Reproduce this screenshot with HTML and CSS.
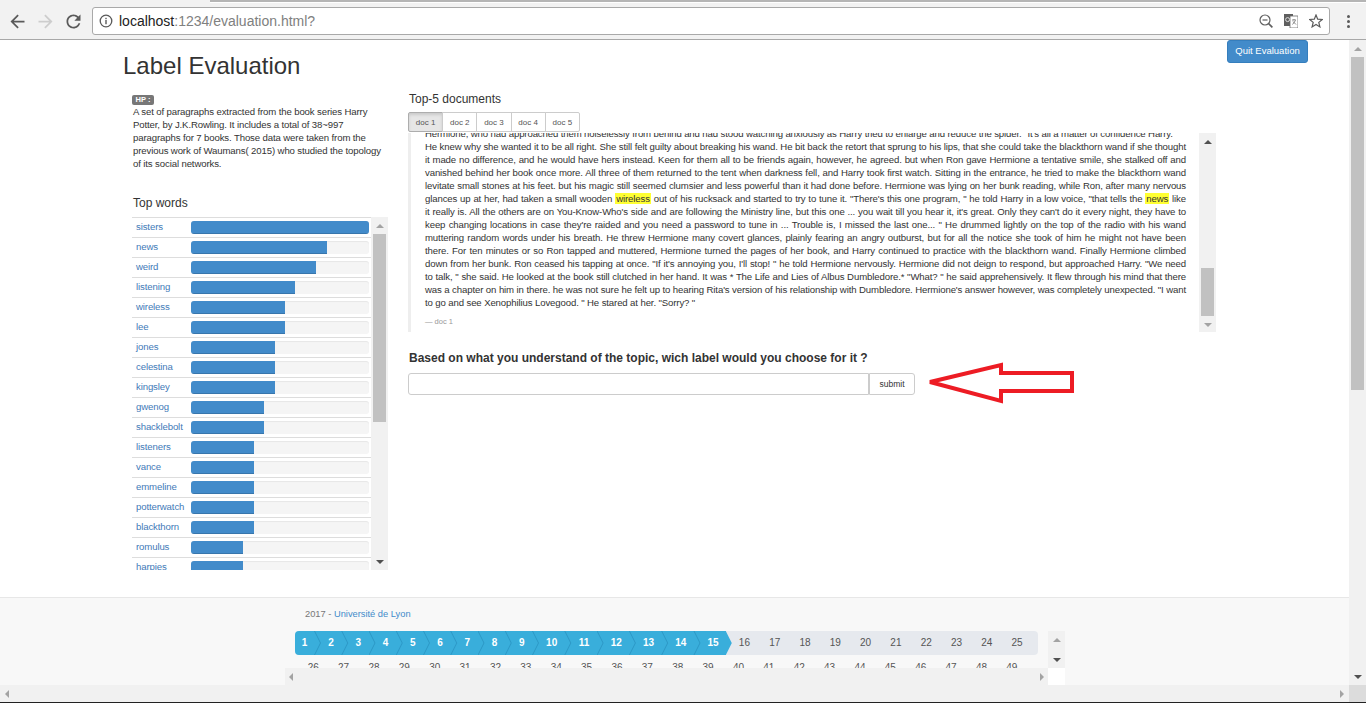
FILE: index.html
```html
<!DOCTYPE html>
<html lang="en">
<head>
    <meta charset="UTF-8">
    <title>Label Evaluation</title>
    <link rel="stylesheet" href="styles.css">
</head>
<body>
    <div class="tabstrip"><div class="tab"></div><div class="tab-rest"></div></div>
    <div class="toolbar">
        <svg class="nav-icon" viewBox="0 0 24 24"><path fill="#5a5a5a" d="M20 11H7.83l5.59-5.59L12 4l-8 8 8 8 1.41-1.41L7.83 13H20v-2z"/></svg>
        <svg class="nav-icon" viewBox="0 0 24 24"><path fill="#cdcdcd" d="M4 11h12.17l-5.59-5.59L12 4l8 8-8 8-1.41-1.41L16.17 13H4v-2z"/></svg>
        <svg class="nav-icon" viewBox="0 0 24 24"><path fill="#5a5a5a" d="M17.65 6.35C16.2 4.9 14.21 4 12 4c-4.42 0-7.99 3.58-7.99 8s3.57 8 7.99 8c3.73 0 6.84-2.55 7.73-6h-2.08c-.82 2.33-3.04 4-5.65 4-3.31 0-6-2.69-6-6s2.69-6 6-6c1.66 0 3.14.69 4.22 1.78L13 11h7V4l-2.35 2.35z"/></svg>
        <div class="urlbar">
            <svg class="info-icon" viewBox="0 0 14 14"><circle cx="7" cy="7" r="5.8" fill="none" stroke="#5a5a5a" stroke-width="1.3"/><rect x="6.3" y="6" width="1.4" height="4.2" fill="#5a5a5a"/><rect x="6.3" y="3.8" width="1.4" height="1.4" fill="#5a5a5a"/></svg>
            <span class="url"><span class="url-host">localhost</span>:1234/evaluation.html?</span>
            <svg class="url-icon" viewBox="0 0 14 14"><circle cx="6" cy="6" r="5" fill="none" stroke="#5f5f5f" stroke-width="1.2"/><path d="M3.5 6h5" stroke="#5f5f5f" stroke-width="1.2"/><path d="M9.6 9.6L13.4 13.4" stroke="#5f5f5f" stroke-width="1.6"/></svg>
            <svg class="url-icon" viewBox="0 0 14 14"><rect x="0" y="0" width="9" height="12" fill="#5f5f5f"/><rect x="6" y="2" width="8" height="12" fill="#fff" stroke="#6a6a6a" stroke-width=".8"/><circle cx="3.6" cy="5.6" r="2" fill="none" stroke="#ddd" stroke-width="1"/><path d="M8 6h4M10 5v1M8.5 10.5L11.5 6.5M9 7.5l3 3" stroke="#6a6a6a" stroke-width=".8"/></svg>
            <svg class="url-icon" viewBox="0 0 14 14"><polygon points="7,1 8.7,5.2 13.3,5.5 9.8,8.4 10.9,12.9 7,10.5 3.1,12.9 4.2,8.4 .7,5.5 5.3,5.2" fill="none" stroke="#5a5a5a" stroke-width="1.2"/></svg>
        </div>
        <div class="menu-dots"><i></i><i></i><i></i></div>
    </div>

    <div class="window">
        <div class="viewport">
            <div class="page">
                <div class="page-head">
                    <h1>Label Evaluation</h1>
                    <button class="quit-btn">Quit Evaluation</button>
                </div>

                <div class="columns">
                    <div class="left-col">
                        <span class="tag">HP :</span>
                        <p class="intro">A set of paragraphs extracted from the book series Harry Potter, by J.K.Rowling. It includes a total of 38~997 paragraphs for 7 books. Those data were taken from the previous work of Waumans( 2015) who studied the topology of its social networks.</p>
                        <h3 class="words-title">Top words</h3>
                        <div class="words-box">
                            <div class="words">
                                <div class="word"><span>sisters</span><div class="bar"><div class="fill" style="width:100%"></div></div></div>
                                <div class="word"><span>news</span><div class="bar"><div class="fill" style="width:76.4%"></div></div></div>
                                <div class="word"><span>weird</span><div class="bar"><div class="fill" style="width:70.2%"></div></div></div>
                                <div class="word"><span>listening</span><div class="bar"><div class="fill" style="width:58.4%"></div></div></div>
                                <div class="word"><span>wireless</span><div class="bar"><div class="fill" style="width:52.8%"></div></div></div>
                                <div class="word"><span>lee</span><div class="bar"><div class="fill" style="width:52.8%"></div></div></div>
                                <div class="word"><span>jones</span><div class="bar"><div class="fill" style="width:47.2%"></div></div></div>
                                <div class="word"><span>celestina</span><div class="bar"><div class="fill" style="width:47.2%"></div></div></div>
                                <div class="word"><span>kingsley</span><div class="bar"><div class="fill" style="width:47.2%"></div></div></div>
                                <div class="word"><span>gwenog</span><div class="bar"><div class="fill" style="width:41%"></div></div></div>
                                <div class="word"><span>shacklebolt</span><div class="bar"><div class="fill" style="width:41%"></div></div></div>
                                <div class="word"><span>listeners</span><div class="bar"><div class="fill" style="width:35.4%"></div></div></div>
                                <div class="word"><span>vance</span><div class="bar"><div class="fill" style="width:35.4%"></div></div></div>
                                <div class="word"><span>emmeline</span><div class="bar"><div class="fill" style="width:35.4%"></div></div></div>
                                <div class="word"><span>potterwatch</span><div class="bar"><div class="fill" style="width:35.4%"></div></div></div>
                                <div class="word"><span>blackthorn</span><div class="bar"><div class="fill" style="width:35.4%"></div></div></div>
                                <div class="word"><span>romulus</span><div class="bar"><div class="fill" style="width:29.2%"></div></div></div>
                                <div class="word"><span>harpies</span><div class="bar"><div class="fill" style="width:29.2%"></div></div></div>
                            </div>
                            <div class="vbar">
                                <div class="sb-btn"><i class="arrow up off"></i></div>
                                <div class="sb-track"><div class="thumb thumb-words"></div></div>
                                <div class="sb-btn"><i class="arrow down"></i></div>
                            </div>
                        </div>
                    </div>

                    <div class="right-col">
                        <h3 class="docs-title">Top-5 documents</h3>
                        <div class="tabs">
                            <button class="doc-tab active">doc 1</button>
                            <button class="doc-tab">doc 2</button>
                            <button class="doc-tab">doc 3</button>
                            <button class="doc-tab">doc 4</button>
                            <button class="doc-tab">doc 5</button>
                        </div>
                        <div class="doc-box">
                            <div class="doc-quote">
                                <div class="doc-text">
                                    <span class="line last">Hermione, who had approached them noiselessly from behind and had stood watching anxiously as Harry tried to enlarge and reduce the spider. "It's all a matter of confidence Harry.</span>
                                    <span class="line">He knew why she wanted it to be all right. She still felt guilty about breaking his wand. He bit back the retort that sprung to his lips, that she could take the blackthorn wand if she thought</span>
                                    <span class="line">it made no difference, and he would have hers instead. Keen for them all to be friends again, however, he agreed. but when Ron gave Hermione a tentative smile, she stalked off and</span>
                                    <span class="line">vanished behind her book once more. All three of them returned to the tent when darkness fell, and Harry took first watch. Sitting in the entrance, he tried to make the blackthorn wand</span>
                                    <span class="line">levitate small stones at his feet. but his magic still seemed clumsier and less powerful than it had done before. Hermione was lying on her bunk reading, while Ron, after many nervous</span>
                                    <span class="line">glances up at her, had taken a small wooden <mark>wireless</mark> out of his rucksack and started to try to tune it. "There's this one program, " he told Harry in a low voice, "that tells the <mark>news</mark> like</span>
                                    <span class="line">it really is. All the others are on You-Know-Who's side and are following the Ministry line, but this one ... you wait till you hear it, it's great. Only they can't do it every night, they have to</span>
                                    <span class="line">keep changing locations in case they're raided and you need a password to tune in ... Trouble is, I missed the last one... " He drummed lightly on the top of the radio with his wand</span>
                                    <span class="line">muttering random words under his breath. He threw Hermione many covert glances, plainly fearing an angry outburst, but for all the notice she took of him he might not have been</span>
                                    <span class="line">there. For ten minutes or so Ron tapped and muttered, Hermione turned the pages of her book, and Harry continued to practice with the blackthorn wand. Finally Hermione climbed</span>
                                    <span class="line">down from her bunk. Ron ceased his tapping at once. "If it's annoying you, I'll stop! " he told Hermione nervously. Hermione did not deign to respond, but approached Harry. "We need</span>
                                    <span class="line">to talk, " she said. He looked at the book still clutched in her hand. It was * The Life and Lies of Albus Dumbledore.* "What? " he said apprehensively. It flew through his mind that there</span>
                                    <span class="line">was a chapter on him in there. he was not sure he felt up to hearing Rita's version of his relationship with Dumbledore. Hermione's answer however, was completely unexpected. "I want</span>
                                    <span class="line last">to go and see Xenophilius Lovegood. " He stared at her. "Sorry? "</span>
                                </div>
                                <div class="doc-source">— doc 1</div>
                            </div>
                            <div class="vbar">
                                <div class="sb-btn"><i class="arrow up"></i></div>
                                <div class="sb-track"><div class="thumb thumb-doc"></div></div>
                                <div class="sb-btn"><i class="arrow down off"></i></div>
                            </div>
                        </div>

                        <h4 class="question">Based on what you understand of the topic, wich label would you choose for it ?</h4>
                        <div class="answer-row">
                            <input type="text" class="answer">
                            <button class="submit-btn">submit</button>
                            <svg class="red-arrow" width="148" height="42" viewBox="0 0 148 42"><polygon points="3,20 74,3 74,11 145,11 145,29 74,29 74,39" fill="#fff" stroke="#ed1c24" stroke-width="4"/></svg>
                        </div>
                    </div>
                </div>

                <div class="footer">
                    <p class="credit">2017 - <a href="#">Université de Lyon</a></p>
                    <div class="steps-box">
                        <div class="steps-scroll">
                            <ol class="steps">
                                <li class="step first">1</li><li class="step">2</li><li class="step">3</li><li class="step">4</li><li class="step">5</li><li class="step">6</li><li class="step">7</li><li class="step">8</li><li class="step">9</li><li class="step wide">10</li><li class="step wide">11</li><li class="step wide">12</li><li class="step wide">13</li><li class="step wide">14</li><li class="step wide">15</li><li class="todo next">16</li><li class="todo">17</li><li class="todo">18</li><li class="todo">19</li><li class="todo">20</li><li class="todo">21</li><li class="todo">22</li><li class="todo">23</li><li class="todo">24</li><li class="todo">25</li>
                            </ol>
                            <ol class="steps-more">
                                <li>26</li><li>27</li><li>28</li><li>29</li><li>30</li><li>31</li><li>32</li><li>33</li><li>34</li><li>35</li><li>36</li><li>37</li><li>38</li><li>39</li><li>40</li><li>41</li><li>42</li><li>43</li><li>44</li><li>45</li><li>46</li><li>47</li><li>48</li><li>49</li>
                            </ol>
                        </div>
                        <div class="vbar">
                            <div class="sb-btn"><i class="arrow up off"></i></div>
                            <div class="sb-btn"><i class="arrow down"></i></div>
                        </div>
                        <div class="hbar">
                            <i class="arrow left off"></i>
                            <i class="arrow right off"></i>
                        </div>
                        <div class="corner-white"></div>
                    </div>
                </div>
            </div>
            <div class="vbar page-vbar">
                <div class="sb-btn"><i class="arrow up off"></i></div>
                <div class="sb-track"><div class="thumb thumb-page"></div></div>
                <div class="sb-btn"><i class="arrow down"></i></div>
            </div>
        </div>
        <div class="page-hbar">
            <i class="arrow left off"></i>
            <i class="arrow right off"></i>
            <div class="corner"></div>
        </div>
    </div>
    <div class="taskbar-line"></div>
</body>
</html>
```

FILE: styles.css
```css
* {
    box-sizing: border-box;
}
html, body {
    margin: 0;
    height: 703px;
    overflow: hidden;
}
body {
    font-family: "Liberation Sans", Arial, sans-serif;
    font-size: 10px;
    color: #333;
    background: #fff;
    display: flex;
    flex-direction: column;
}

/* browser bar */
.tabstrip {
    display: flex;
    height: 3px;
    background: #f2f2f2;
}
.tab {
    width: 210px;
}
.tab-rest {
    flex: 1;
    border-top: 2px solid #b5b5b5;
    background: #fff;
}
.toolbar {
    height: 37px;
    background: #f2f2f2;
    border-bottom: 1px solid #a8a8a8;
    display: flex;
    align-items: center;
    padding: 0 0 0 7px;
    gap: 7px;
    flex: none;
}
.nav-icon {
    width: 21px;
    height: 21px;
    flex: none;
}
.urlbar {
    width: 1238px;
    height: 28px;
    margin-left: 1px;
    background: #fff;
    border: 1px solid #a9a9a9;
    border-radius: 3px;
    display: flex;
    align-items: center;
    padding: 0 6px 0 6px;
}
.info-icon {
    width: 14px;
    height: 14px;
    flex: none;
}
.url {
    margin-left: 6px;
    font-size: 14px;
    color: #808080;
    flex: 1;
}
.url-host {
    color: #222;
}
.url-icon {
    width: 14px;
    height: 14px;
    margin-left: 11px;
    flex: none;
}
.menu-dots {
    display: flex;
    flex-direction: column;
    gap: 2px;
    margin-left: 10px;
}
.menu-dots i {
    width: 3px;
    height: 3px;
    border-radius: 50%;
    background: #5a5a5a;
}

/* window and scrollbars */
.window {
    flex: none;
    height: 662px;
    display: flex;
    flex-direction: column;
}
.viewport {
    height: 645px;
    display: flex;
}
.page {
    flex: 1;
    min-width: 0;
    display: flex;
    flex-direction: column;
}
.vbar {
    width: 17px;
    flex: none;
    background: #f1f1f1;
    display: flex;
    flex-direction: column;
    justify-content: space-between;
}
.sb-btn {
    height: 17px;
    flex: none;
    display: flex;
    align-items: center;
    justify-content: center;
}
.sb-track {
    flex: 1;
    padding: 0 2px;
}
.thumb {
    background: #c1c1c1;
}
.thumb-words {
    margin-top: 0;
    height: 188px;
}
.thumb-doc {
    margin-top: 118px;
    height: 48px;
}
.thumb-page {
    height: 333px;
}
.arrow {
    display: block;
    width: 0;
    height: 0;
    border: 4px solid transparent;
}
.arrow.up {
    border-top-width: 0;
    border-bottom-color: #505050;
}
.arrow.down {
    border-bottom-width: 0;
    border-top-color: #505050;
}
.arrow.left {
    border-left-width: 0;
    border-right-color: #a3a3a3;
}
.arrow.right {
    border-right-width: 0;
    border-left-color: #a3a3a3;
}
.arrow.up.off {
    border-bottom-color: #a3a3a3;
}
.arrow.down.off {
    border-top-color: #a3a3a3;
}
.page-hbar {
    height: 17px;
    background: #f1f1f1;
    display: flex;
    align-items: center;
    justify-content: space-between;
    padding-left: 5px;
}
.page-hbar .arrow.right {
    margin-left: auto;
    margin-right: 5px;
}
.corner {
    width: 17px;
    height: 17px;
    background: #dcdcdc;
}
.taskbar-line {
    height: 1px;
    background: #222;
    flex: none;
}

/* header */
.page-head {
    height: 51px;
    flex: none;
    display: flex;
    justify-content: space-between;
    align-items: flex-start;
    padding: 0 41px 0 123px;
}
h1 {
    font-size: 24px;
    font-weight: normal;
    line-height: 28px;
    margin: 12px 0 0;
}
.quit-btn {
    font: 9.5px "Liberation Sans", Arial, sans-serif;
    color: #fff;
    background: #428bca;
    border: 1px solid #357ebd;
    border-radius: 3px;
    height: 23px;
    width: 81px;
    padding: 0 0 2px;
}

/* columns */
.columns {
    flex: 1;
    min-height: 0;
    display: grid;
    grid-template-columns: 256px 808px;
    column-gap: 20px;
    padding-left: 132px;
}
.tag {
    display: block;
    width: 22px;
    height: 10px;
    margin-top: 4px;
    background: #777;
    color: #fff;
    font-size: 7.5px;
    font-weight: bold;
    line-height: 10px;
    text-align: center;
    border-radius: 2px;
}
.intro {
    margin: 0;
    width: 250px;
    font-size: 9.6px;
    letter-spacing: -0.12px;
    line-height: 13px;
    padding-left: 1px;
}
.words-title {
    font-size: 12px;
    font-weight: normal;
    line-height: 14px;
    margin: 26px 0 7px 1px;
}
.words-box {
    display: flex;
    height: 353px;
}
.words {
    width: 239px;
    overflow: hidden;
}
.word {
    height: 20px;
    border-top: 1px solid #ddd;
    display: flex;
    align-items: center;
    padding: 0 2px 0 4px;
}
.word span {
    width: 55px;
    flex: none;
    padding-bottom: 2px;
    font-size: 9.6px;
    letter-spacing: -0.12px;
    color: #3f7ab8;
}
.bar {
    flex: 1;
    height: 13px;
    background: #f5f5f5;
    border-radius: 3px;
    overflow: hidden;
    box-shadow: inset 0 1px 1px rgba(0, 0, 0, 0.06);
}
.fill {
    height: 100%;
    background: #428bca;
    box-shadow: inset 0 -1px 0 rgba(0, 0, 0, 0.15);
}

/* documents */
.docs-title {
    font-size: 12px;
    font-weight: normal;
    line-height: 14px;
    margin: 1px 0 6px 1px;
}
.tabs {
    display: flex;
    height: 21px;
    padding-bottom: 1px;
    position: relative;
    z-index: 1;
}
.doc-tab {
    width: 35.2px;
    height: 20px;
    margin-right: -1px;
    padding: 0;
    font: 8px "Liberation Sans", Arial, sans-serif;
    color: #555;
    background: #fff;
    border: 1px solid #ccc;
}
.doc-tab:first-child {
    border-radius: 2px 0 0 2px;
}
.doc-tab:last-child {
    border-radius: 0 2px 2px 0;
}
.doc-tab.active {
    background: #e6e6e6;
    border-color: #adadad;
    box-shadow: inset 0 2px 3px rgba(0, 0, 0, 0.12);
}
.doc-box {
    display: flex;
    height: 199px;
}
.doc-quote {
    flex: 1;
    overflow: hidden;
    border-left: 3px solid #eee;
    padding: 0 13px 0 14px;
}
.doc-text {
    margin-top: -6px;
    font-size: 9.6px;
    letter-spacing: -0.12px;
    line-height: 13px;
}
.line {
    display: block;
    text-align: justify;
    text-align-last: justify;
    white-space: nowrap;
}
.line.last {
    text-align-last: left;
}
mark {
    background: #ffff33;
    color: #333;
    padding: 0 1px;
}
.doc-source {
    margin-top: 7px;
    font-size: 7.5px;
    line-height: 11px;
    color: #999;
}
.question {
    font-size: 12px;
    font-weight: bold;
    line-height: 14px;
    margin: 19px 0 8px 1px;
}
.answer-row {
    display: flex;
    align-items: flex-start;
}
.answer {
    width: 461px;
    height: 22px;
    border: 1px solid #ccc;
    border-radius: 3px 0 0 3px;
    background: #fff;
    padding: 0 6px;
}
.submit-btn {
    width: 46px;
    height: 22px;
    padding: 0;
    font: 8.5px "Liberation Sans", Arial, sans-serif;
    color: #333;
    background: #fff;
    border: 1px solid #ccc;
    border-radius: 0 3px 3px 0;
}
.red-arrow {
    flex: none;
    margin: -11px 0 0 12px;
}

/* footer */
.footer {
    height: 88px;
    flex: none;
    background: #f8f8f8;
    border-top: 1px solid #e7e7e7;
    padding: 10px 0 0 285px;
}
.credit {
    margin: 0 0 10px 20px;
    font-size: 9.3px;
    line-height: 13px;
    color: #777;
}
.credit a {
    color: #428bca;
    text-decoration: none;
}
.steps-box {
    width: 780px;
    height: 54px;
    display: grid;
    grid-template-columns: 763px 17px;
    grid-template-rows: 37px 17px;
}
.steps-scroll {
    overflow: hidden;
    padding-left: 10px;
}
.steps, .steps-more {
    list-style: none;
    margin: 0;
    padding: 0;
    display: flex;
}
.steps {
    width: 743px;
    height: 24px;
    background: #e6e9ee;
    border-radius: 4px;
    padding-right: 9px;
}
.step, .todo {
    position: relative;
    height: 24px;
    line-height: 24px;
    text-align: center;
    padding-left: 7px;
}
.step {
    width: 27.25px;
    background: #39aedb;
    color: #fff;
    font-weight: bold;
}
.step.wide {
    width: 32.3px;
}
.step.first {
    width: 19px;
    padding-left: 0;
    border-radius: 4px 0 0 4px;
}
.step::before {
    content: "";
    position: absolute;
    left: 0;
    top: 0;
    width: 8px;
    height: 24px;
    background: #2d98c6;
    clip-path: polygon(0 0, 1px 0, 7px 50%, 1px 100%, 0 100%, 6px 50%);
}
.step.first::before {
    display: none;
}
.todo {
    width: 30.3px;
    color: #555;
}
.todo.next::before {
    content: "";
    position: absolute;
    left: 0;
    top: 0;
    width: 6px;
    height: 24px;
    background: #39aedb;
    clip-path: polygon(0 0, 100% 50%, 0 100%);
}
.steps-more {
    margin-top: 6px;
    padding-left: 3px;
}
.steps-more li {
    width: 30.39px;
    text-align: center;
    line-height: 13px;
    color: #555;
}
.hbar {
    background: #f1f1f1;
    display: flex;
    align-items: center;
    justify-content: space-between;
    padding: 0 4px;
}
.corner-white {
    background: #fff;
}
```
